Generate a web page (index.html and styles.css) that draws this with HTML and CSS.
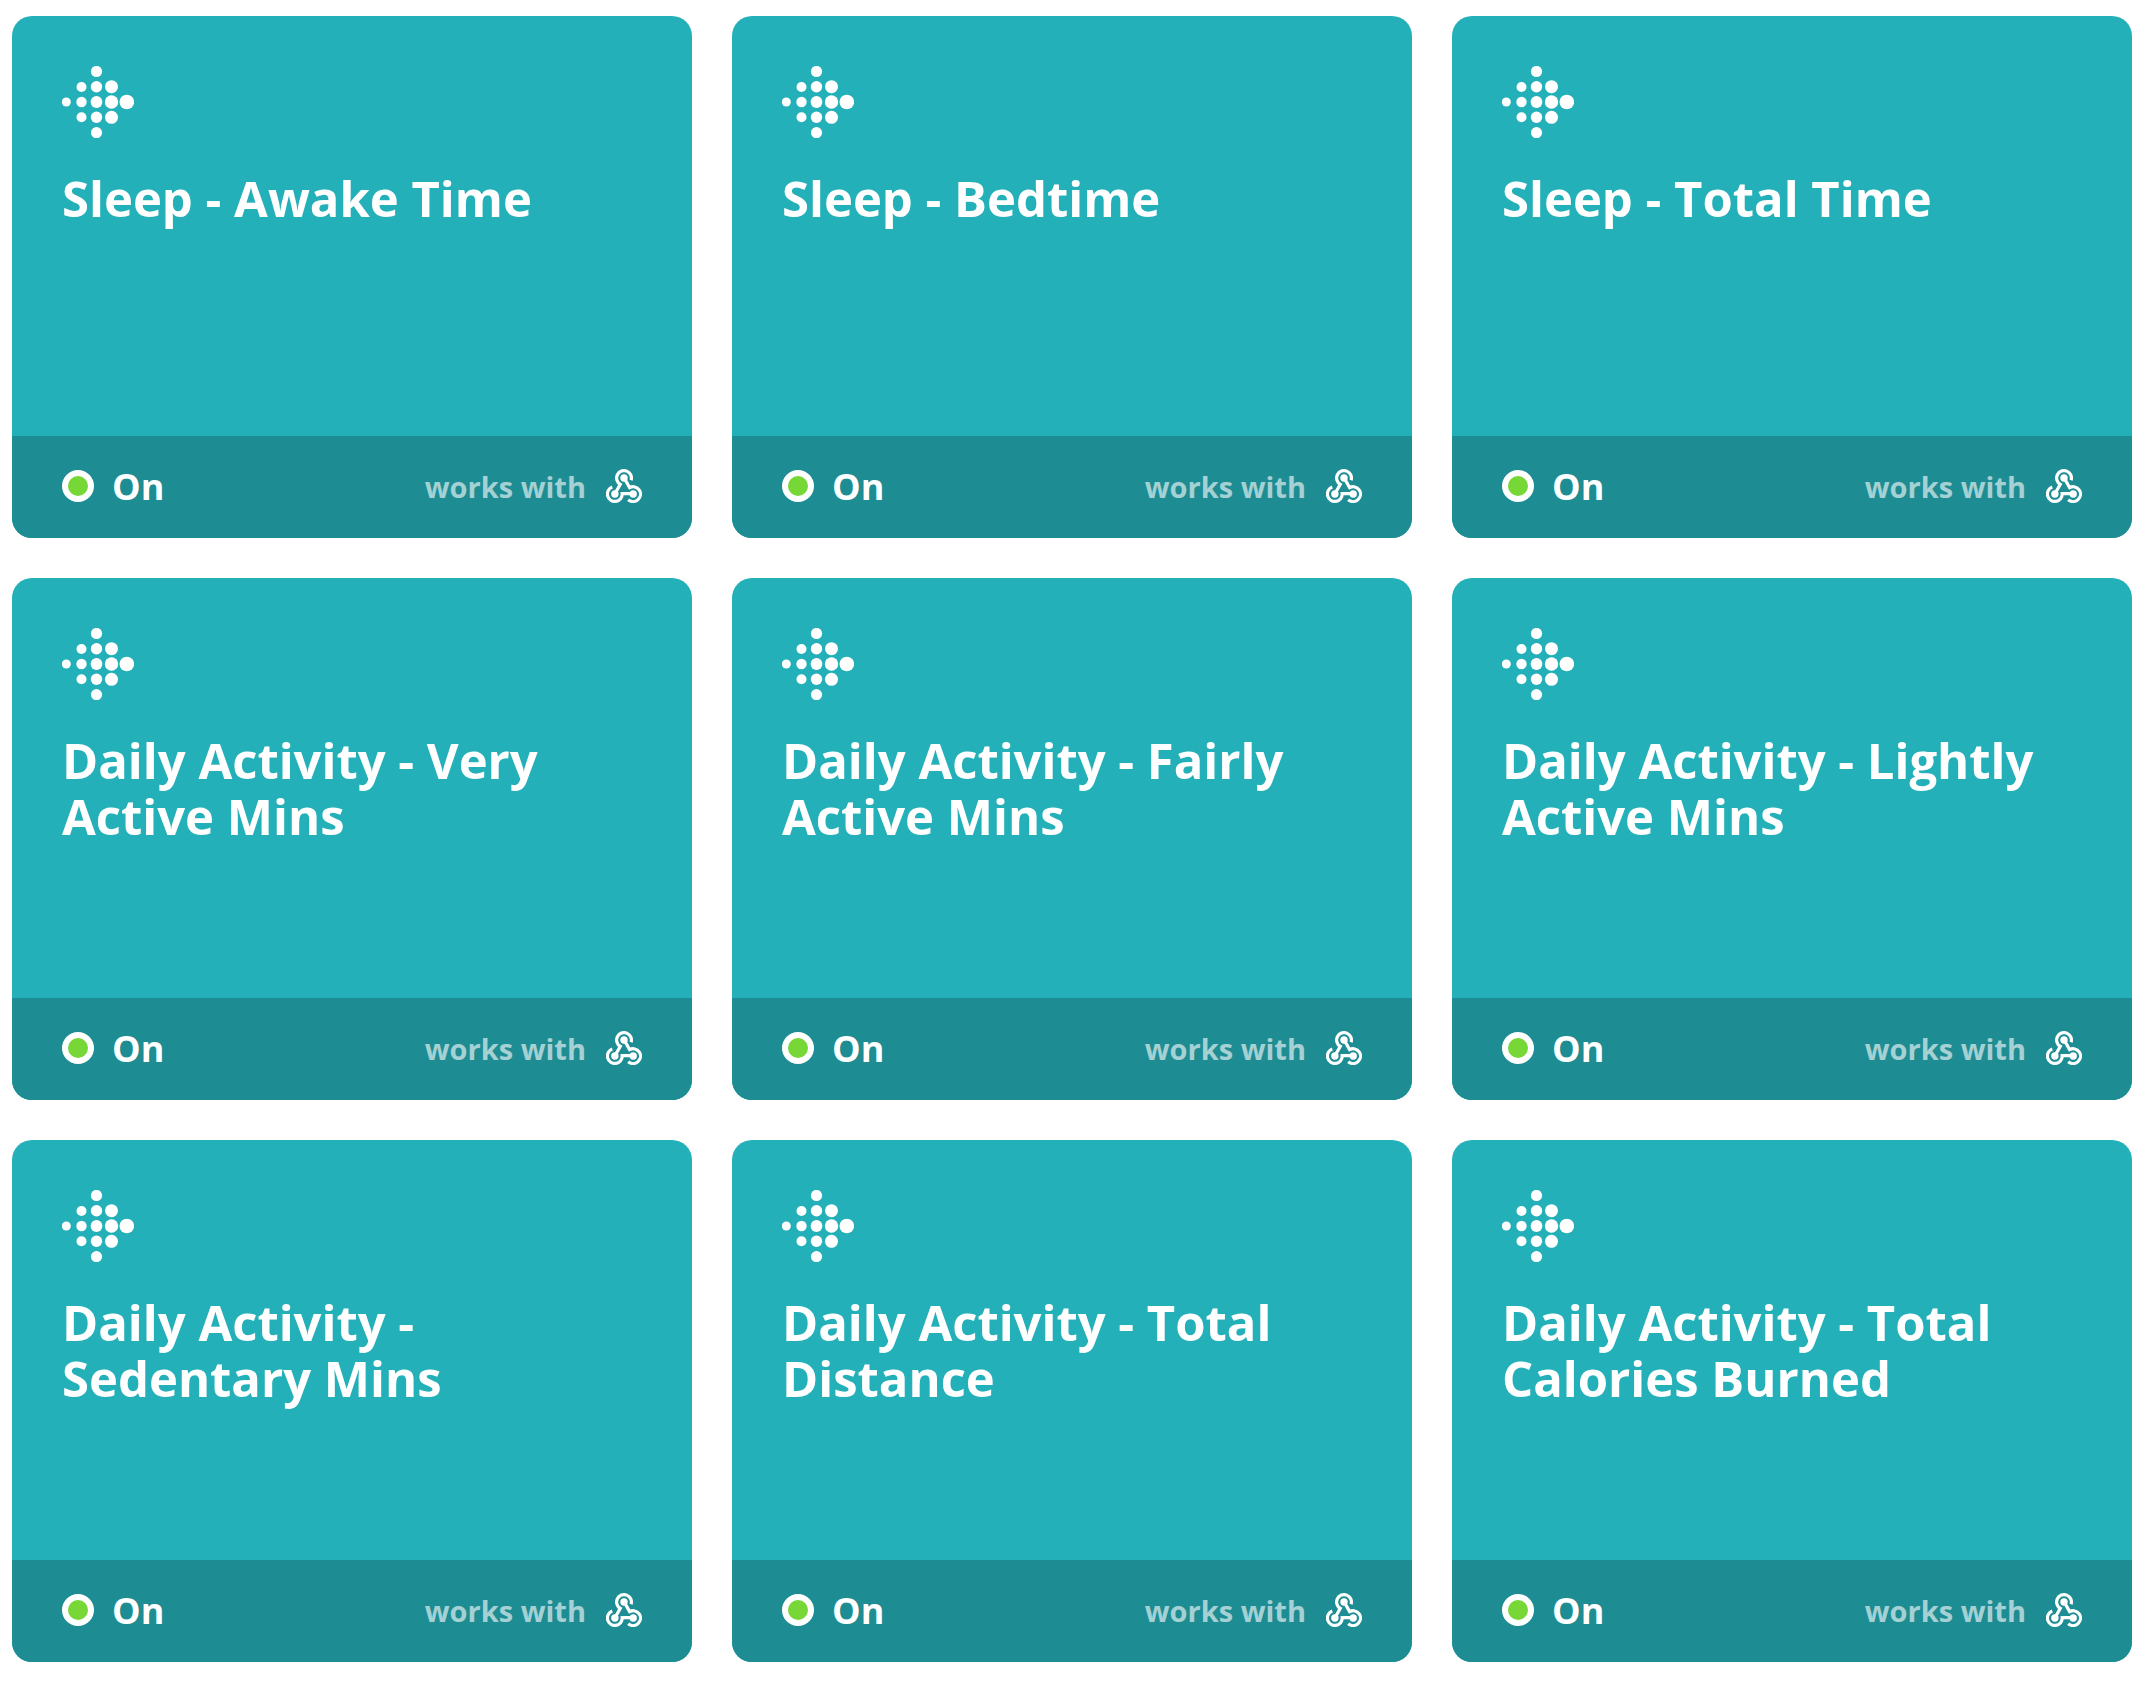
FILE: index.html
```html
<!DOCTYPE html>
<html lang="en">
<head>
<meta charset="utf-8">
<meta name="viewport" content="width=device-width, initial-scale=1">
<title>My Applets</title>
<link rel="stylesheet" href="styles.css">
</head>
<body>
<svg class="sprite" aria-hidden="true">
  <symbol id="fitbit" viewBox="0 0 72 72">
    <circle cx="4.3" cy="36" r="4.5"/>
    <circle cx="19.5" cy="21" r="5"/><circle cx="19.5" cy="36" r="5.2"/><circle cx="19.5" cy="51.3" r="5"/>
    <circle cx="34.5" cy="5.5" r="5.6"/><circle cx="34.5" cy="20.7" r="5.7"/><circle cx="34.5" cy="36" r="5.9"/><circle cx="34.5" cy="51.3" r="5.7"/><circle cx="34.5" cy="66.6" r="5.6"/>
    <circle cx="49.5" cy="20.7" r="6.5"/><circle cx="49.5" cy="36" r="6.7"/><circle cx="49.5" cy="51.3" r="6.5"/>
    <circle cx="64.8" cy="36" r="7.3"/>
  </symbol>
  <symbol id="webhooks" viewBox="0 0 36 34">
    <g fill="none" stroke="currentColor" stroke-width="3.2">
      <path d="M25.1 11.2A7.4 7.4 0 1 0 14.3 15.4L9.2 24.2"/>
      <path d="M6.3 18.1A7.4 7.4 0 1 0 16.2 24.6H27"/>
      <path d="M22.2 30.7A7.4 7.4 0 1 0 23.6 18.6L18.2 9"/>
    </g>
    <circle cx="18" cy="9" r="3.7"/><circle cx="8.9" cy="25" r="3.7"/><circle cx="27.2" cy="25" r="3.7"/>
  </symbol>
</svg>
<main>
  <ul class="applets">
    <li><a class="card" href="#">
      <div class="card-body"><svg class="service"><use href="#fitbit"/></svg><h2 class="title">Sleep - Awake Time</h2></div>
      <div class="card-footer"><span class="status">On</span><span class="works">works with <svg class="webhooks"><use href="#webhooks"/></svg></span></div>
    </a></li>
    <li><a class="card" href="#">
      <div class="card-body"><svg class="service"><use href="#fitbit"/></svg><h2 class="title">Sleep - Bedtime</h2></div>
      <div class="card-footer"><span class="status">On</span><span class="works">works with <svg class="webhooks"><use href="#webhooks"/></svg></span></div>
    </a></li>
    <li><a class="card" href="#">
      <div class="card-body"><svg class="service"><use href="#fitbit"/></svg><h2 class="title">Sleep - Total Time</h2></div>
      <div class="card-footer"><span class="status">On</span><span class="works">works with <svg class="webhooks"><use href="#webhooks"/></svg></span></div>
    </a></li>
    <li><a class="card" href="#">
      <div class="card-body"><svg class="service"><use href="#fitbit"/></svg><h2 class="title">Daily Activity - Very Active Mins</h2></div>
      <div class="card-footer"><span class="status">On</span><span class="works">works with <svg class="webhooks"><use href="#webhooks"/></svg></span></div>
    </a></li>
    <li><a class="card" href="#">
      <div class="card-body"><svg class="service"><use href="#fitbit"/></svg><h2 class="title">Daily Activity - Fairly Active Mins</h2></div>
      <div class="card-footer"><span class="status">On</span><span class="works">works with <svg class="webhooks"><use href="#webhooks"/></svg></span></div>
    </a></li>
    <li><a class="card" href="#">
      <div class="card-body"><svg class="service"><use href="#fitbit"/></svg><h2 class="title">Daily Activity - Lightly Active Mins</h2></div>
      <div class="card-footer"><span class="status">On</span><span class="works">works with <svg class="webhooks"><use href="#webhooks"/></svg></span></div>
    </a></li>
    <li><a class="card" href="#">
      <div class="card-body"><svg class="service"><use href="#fitbit"/></svg><h2 class="title">Daily Activity - Sedentary Mins</h2></div>
      <div class="card-footer"><span class="status">On</span><span class="works">works with <svg class="webhooks"><use href="#webhooks"/></svg></span></div>
    </a></li>
    <li><a class="card" href="#">
      <div class="card-body"><svg class="service"><use href="#fitbit"/></svg><h2 class="title">Daily Activity - Total Distance</h2></div>
      <div class="card-footer"><span class="status">On</span><span class="works">works with <svg class="webhooks"><use href="#webhooks"/></svg></span></div>
    </a></li>
    <li><a class="card" href="#">
      <div class="card-body"><svg class="service"><use href="#fitbit"/></svg><h2 class="title">Daily Activity - Total Calories Burned</h2></div>
      <div class="card-footer"><span class="status">On</span><span class="works">works with <svg class="webhooks"><use href="#webhooks"/></svg></span></div>
    </a></li>
  </ul>
</main>
</body>
</html>
```
FILE: styles.css
```css
*,
*::before {
  box-sizing: border-box;
}

body {
  margin: 0;
  background: #fff;
  color: #fff;
  font-family: "Open Sans", sans-serif;
  font-weight: 700;
}

.sprite {
  display: none;
}

.applets {
  display: grid;
  grid-template-columns: repeat(3, minmax(0, 1fr));
  gap: 40px;
  margin: 0;
  padding: 16px 16px 28px 12px;
  list-style: none;
}

.card {
  display: flex;
  flex-direction: column;
  min-height: 522px;
  border-radius: 20px;
  overflow: hidden;
  background: #24b0b8;
  color: inherit;
  text-decoration: none;
}

.card-body {
  flex: 1;
  padding: 50px;
}

.service {
  display: block;
  width: 72px;
  height: 72px;
  fill: currentColor;
}

.title {
  margin: 32px 0 0;
  font-size: 49px;
  font-weight: inherit;
  line-height: 56px;
}

.card-footer {
  display: flex;
  align-items: center;
  justify-content: space-between;
  height: 102px;
  padding: 0 50px 2px;
  background: #1d8d93;
}

.status,
.works {
  display: flex;
  align-items: center;
}

.status {
  gap: 18px;
  font-size: 36px;
}

.status::before {
  content: "";
  width: 32px;
  height: 32px;
  border: 6px solid #fff;
  border-radius: 50%;
  background: #76d737;
}

.works {
  gap: 20px;
  color: #a5d1d4;
  font-size: 29px;
}

.webhooks {
  width: 36px;
  height: 34px;
  color: #fff;
  fill: currentColor;
}
```
